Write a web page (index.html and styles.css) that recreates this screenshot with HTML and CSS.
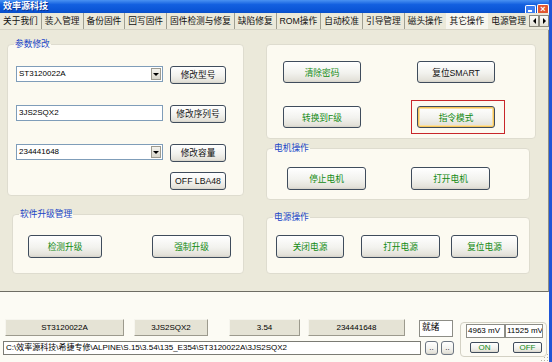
FILE: index.html
```html
<!DOCTYPE html>
<html lang="zh-CN">
<head>
    <meta charset="UTF-8">
    <title>效率源科技</title>
    <link rel="stylesheet" href="styles.css">
</head>
<body>
<div class="window">
    <div class="titlebar">
        <span class="title">效率源科技</span>
        <span class="ctl ctl-min"></span>
        <span class="ctl ctl-close">×</span>
    </div>

    <div class="tabstrip">
        <div class="tabs">
            <span class="tab">关于我们</span>
            <span class="tab">装入管理</span>
            <span class="tab">备份固件</span>
            <span class="tab">回写固件</span>
            <span class="tab">固件检测与修复</span>
            <span class="tab">缺陷修复</span>
            <span class="tab">ROM操作</span>
            <span class="tab">自动校准</span>
            <span class="tab">引导管理</span>
            <span class="tab">磁头操作</span>
            <span class="tab active">其它操作</span>
            <span class="tab">电源管理</span>
        </div>
        <div class="tab-arrows">
            <span class="arr"><i class="tri-left"></i></span>
            <span class="arr"><i class="tri-right"></i></span>
        </div>
    </div>

    <div class="panel">
        <div class="col-left">
            <!-- 参数修改 -->
            <div class="group g-param">
                <span class="legend">参数修改</span>
                <div class="row">
                    <div class="field combo">ST3120022A<span class="drop"><i class="tri-down"></i></span></div>
                    <button class="btn btn-param">修改型号</button>
                </div>
                <div class="row row-2">
                    <div class="field combo">3JS2SQX2</div>
                    <button class="btn btn-param">修改序列号</button>
                </div>
                <div class="row row-3">
                    <div class="field combo">234441648<span class="drop"><i class="tri-down"></i></span></div>
                    <button class="btn btn-param">修改容量</button>
                </div>
                <button class="btn btn-param btn-lba">OFF LBA48</button>
            </div>

            <!-- 软件升级管理 -->
            <div class="group g-soft">
                <span class="legend">软件升级管理</span>
                <div class="btn-row">
                    <button class="btn green w74">检测升级</button>
                    <button class="btn green w79 gap50">强制升级</button>
                </div>
            </div>
        </div>

        <div class="col-right">
            <div class="group g-misc">
                <div class="misc-grid">
                    <button class="btn green">清除密码</button>
                    <button class="btn">复位SMART</button>
                    <button class="btn green">转换到F级</button>
                    <button class="btn green focused">指令模式</button>
                </div>
            </div>

            <!-- 电机操作 -->
            <div class="group g-motor">
                <span class="legend">电机操作</span>
                <div class="btn-row">
                    <button class="btn green w79">停止电机</button>
                    <button class="btn green w79 gap45">打开电机</button>
                </div>
            </div>

            <!-- 电源操作 -->
            <div class="group g-power">
                <span class="legend">电源操作</span>
                <div class="btn-row">
                    <button class="btn green w68">关闭电源</button>
                    <button class="btn green w79 gap17">打开电源</button>
                    <button class="btn green w67 gap11">复位电源</button>
                </div>
            </div>
        </div>
    </div>

    <div class="statusarea">
        <div class="status-left">
            <div class="info-row">
                <span class="flat f1">ST3120022A</span>
                <span class="flat f2">3JS2SQX2</span>
                <span class="flat f3">3.54</span>
                <span class="flat f4">234441648</span>
                <span class="state">就绪</span>
            </div>
            <div class="path-row">
                <span class="field path">C:\效率源科技\希捷专修\ALPINE\S.15\3.54\135_E354\ST3120022A\3JS2SQX2</span>
                <button class="btn mini">..</button>
                <button class="btn mini">..</button>
            </div>
        </div>
        <div class="volt-box">
            <div class="volt-fields">
                <span class="vfield">4963 mV</span>
                <span class="vfield">11525 mV</span>
            </div>
            <div class="volt-btns">
                <button class="btn green onoff">ON</button>
                <button class="btn green onoff off">OFF</button>
            </div>
        </div>
        <span class="grip"></span>
    </div>
</div>
</body>
</html>
```

FILE: styles.css
```css
* { box-sizing: border-box; }
body { margin: 0; width: 552px; height: 362px; overflow: hidden; font-family: "Liberation Sans", "Noto Sans CJK SC", sans-serif; font-size: 8.7px; color: #000; background: #fcfbf4; }

/* 按钮 */
.btn { font: inherit; color: #111; padding: 0; margin: 0; text-align: center; white-space: nowrap; border: 1px solid #3f4c5c; border-radius: 3px; background: linear-gradient(#ffffff, #f2f2ee 55%, #e4e2da 90%, #d5d2c8); }

.window { width: 552px; height: 362px; border-right: 3px solid #1f55d6; display: flex; flex-direction: column; background: #fcfbf4; position: relative; }

/* 标题栏 */
.titlebar { height: 13px; flex: none; display: flex; align-items: flex-end; padding-left: 3px; background: linear-gradient(#4a92f2, #1360e0 35%, #0b55d6 80%, #0a4fc8); }
.title { align-self: center; color: #fff; font-weight: bold; font-size: 9px; line-height: 13px; text-shadow: 1px 1px 0 #0a2f8f; }
.ctl { width: 11px; height: 8px; border: 1px solid #fff; border-bottom: 0; border-radius: 2px 2px 0 0; }
.ctl-min { margin-left: auto; background: #3a7cf0; position: relative; }
.ctl-min::after { content: ""; position: absolute; left: 2px; bottom: 1px; width: 4px; height: 2px; background: #fff; }
.ctl-close { margin-left: 1px; width: 12px; height: 9px; background: #e2562f; color: #fff; font-size: 9px; line-height: 9px; text-align: center; font-weight: bold; }

/* 选项卡 */
.tabstrip { height: 17px; flex: none; display: flex; background: #ebe9da; border-bottom: 1px solid #d6d4c6; }
.tabs { flex: 1; display: flex; overflow: hidden; }
.tab { padding: 0 3px; line-height: 16px; white-space: nowrap; border-right: 1px solid #a09f91; color: #111; }
.tab.active { background: #f7f6ef; border-right-color: transparent; margin-left: -1px; border-left: 1px solid #ebe9da; }
.tab-arrows { display: flex; padding-top: 2px; }
.arr { width: 10px; height: 12px; background: linear-gradient(#fdfdfb, #e3e1d6); border: 1px solid #8c8a7e; display: flex; align-items: center; justify-content: center; }
.tri-left { border-style: solid; border-width: 3px 3px 3px 0; border-color: transparent #000 transparent transparent; }
.tri-right { border-style: solid; border-width: 3px 0 3px 3px; border-color: transparent transparent transparent #000; }
.tri-down { border-style: solid; border-width: 3px 3px 0 3px; border-color: #000 transparent transparent transparent; }

/* 面板 */
.panel { height: 262px; flex: none; display: flex; background: #ebe9da; border-bottom: 1px solid #6e6d64; border-right: 1px solid #8f8e84; }
.col-left { width: 244px; padding-left: 7px; display: flex; flex-direction: column; }
.col-right { margin-left: 22px; display: flex; flex-direction: column; }

.group { position: relative; background: #fcfaf1; border: 1px solid #dedccf; border-radius: 4px; }
.legend { position: absolute; top: -7px; left: 6px; padding: 0 1px; color: #1a45c8; line-height: 12px; background: linear-gradient(#ebe9da 50%, #fcfaf1 50%); }

.g-param { margin-top: 14px; width: 237px; height: 152px; padding: 21px 0 0 8px; }
.row { display: flex; gap: 7px; align-items: flex-start; }
.row-2 { margin-top: 21px; }
.row-3 { margin-top: 21px; }
.btn-lba { margin: 10px 0 0 154px; }

.field { background: #fff; border: 1px solid #7f9db9; line-height: 14px; padding-left: 2px; font-size: 8px; white-space: nowrap; overflow: hidden; }
.combo { width: 147px; height: 16px; position: relative; }
.drop { position: absolute; right: 1px; top: 1px; width: 10px; height: 12px; background: linear-gradient(#f4f3ee, #d9d6cb); border: 1px solid #9d9b90; display: flex; align-items: center; justify-content: center; }

.g-soft { margin: 18px 0 0 5px; width: 232px; height: 60px; padding: 20px 0 0 15px; }
.btn-row { display: flex; }

.g-misc { margin-top: 14px; width: 270px; height: 95px; padding: 16px 0 0 16px; }
.misc-grid { display: grid; grid-template-columns: 78px 78px; grid-auto-rows: 22px; column-gap: 56px; row-gap: 23px; }

.g-motor { margin-top: 9px; width: 264px; height: 52px; padding: 18px 0 0 20px; }
.g-power { margin-top: 17px; width: 264px; height: 57px; padding: 17px 0 0 9px; }

.btn-param { width: 56px; height: 18px; line-height: 16px; }
.green { color: #128a12; }
.btn-row .btn { height: 23px; }
.w67 { width: 67px; }
.w68 { width: 68px; }
.w74 { width: 74px; }
.w79 { width: 79px; }
.gap11 { margin-left: 11px; }
.gap17 { margin-left: 17px; }
.gap45 { margin-left: 45px; }
.gap50 { margin-left: 50px; }
.focused { position: relative; box-shadow: inset 0 0 0 1px #f7c65a, inset 0 0 0 2px #fbe0a0; }
.focused::after { content: ""; position: absolute; left: -7px; top: -7px; right: -11px; bottom: -7px; border: 1px solid #c8262a; }

/* 状态栏 */
.statusarea { flex: 1; display: flex; background: #fcfbf4; position: relative; }
.status-left { width: 454px; }
.info-row { margin-top: 27px; display: flex; align-items: flex-start; }
.flat { height: 17px; line-height: 15px; text-align: center; font-size: 8px; background: #e5e3d5; border: 1px solid; border-color: #f6f5ee #9c9a8d #9c9a8d #f6f5ee; }
.f1 { margin-left: 5px; width: 119px; }
.f2 { margin-left: 10px; width: 74px; }
.f3 { margin-left: 21px; width: 71px; }
.f4 { margin-left: 8px; width: 97px; }
.state { margin: 1px 0 0 14px; width: 34px; height: 17px; background: #fff; border: 1px solid #8d8d86; padding: 0 0 0 2px; line-height: 12px; }
.path-row { margin-top: 4px; display: flex; align-items: flex-start; }
.path { margin-left: 3px; width: 418px; height: 14px; line-height: 12px; border-color: #7b7b74; }
.mini { margin-left: 3px; width: 13px; height: 14px; line-height: 10px; font-size: 8px; border-color: #6d7682; }
.mini:first-of-type { margin-left: 4px; }

.volt-box { margin: 30px 0 0 6px; width: 87px; height: 35px; border: 1px solid #d3d1c4; border-radius: 4px; padding: 1px 0 0 5px; }
.volt-fields { display: flex; }
.vfield { width: 39px; height: 14px; background: #fff; border: 1px solid #8d8d86; font-size: 8px; line-height: 12px; padding-left: 1px; white-space: nowrap; overflow: hidden; }
.vfield + .vfield { width: 38px; }
.volt-btns { display: flex; margin-top: 4px; padding-left: 4px; }
.onoff { width: 29px; height: 11px; line-height: 9px; font-size: 8px; border-radius: 2px; }
.off { margin-left: 14px; }

.grip { position: absolute; right: 1px; bottom: 1px; width: 8px; height: 8px; background: radial-gradient(circle, #b5b3a6 40%, transparent 45%) 0 0 / 3px 3px; clip-path: polygon(100% 0, 100% 100%, 0 100%); }
```
